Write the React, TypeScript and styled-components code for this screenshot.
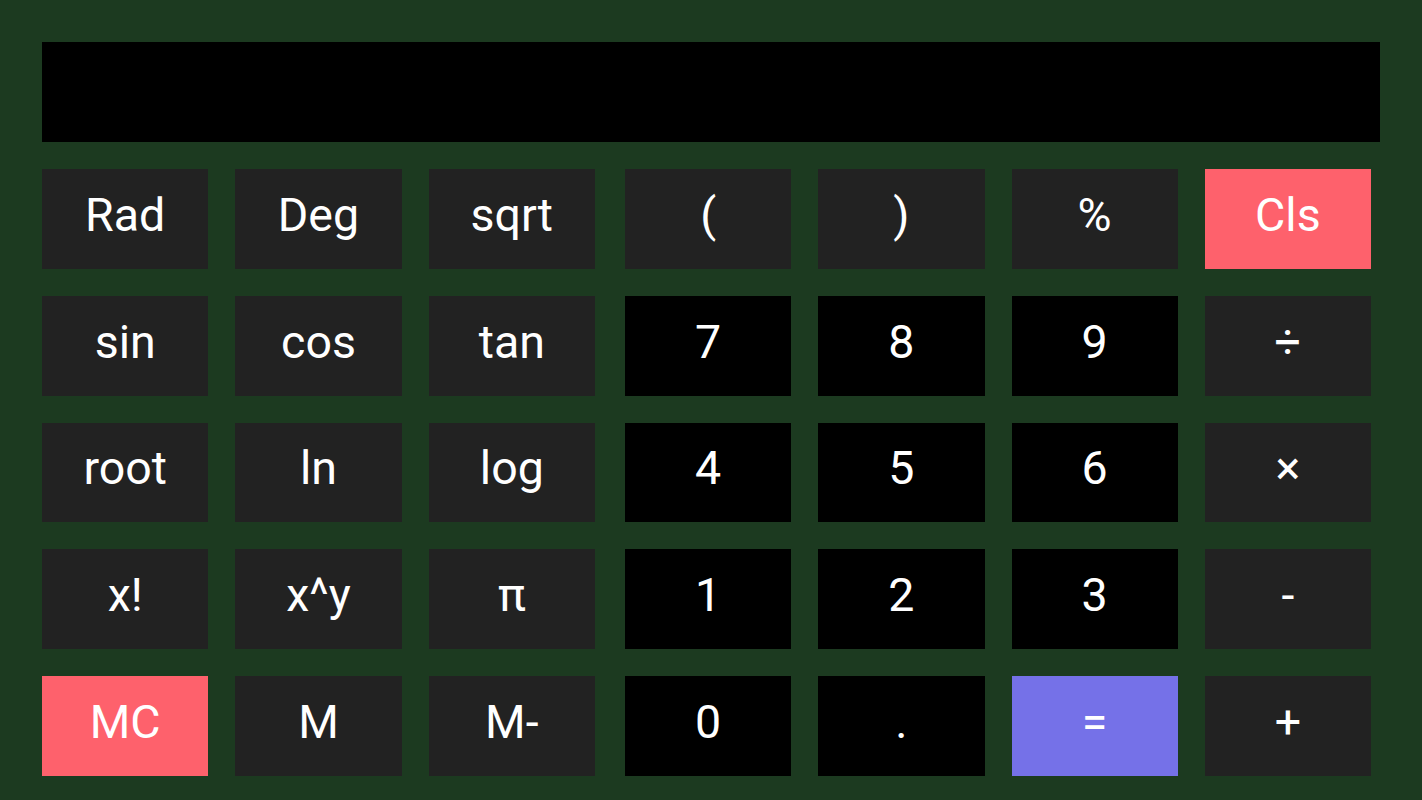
import React from "react";
import styled, { createGlobalStyle } from "styled-components";

const Global = createGlobalStyle`
  html, body { margin: 0; padding: 0; background: #1c3a20; }
  body { font-family: Roboto, "Noto Sans", sans-serif; }
`;

const Screen = styled.div`
  width: 1422px;
  height: 800px;
  box-sizing: border-box;
  padding: 42px 42px 0 42px;
  background: #1c3a20;
  display: flex;
  flex-direction: column;
  gap: 27px;
`;

const Display = styled.div`
  height: 100px;
  background: #000;
`;

const Keypad = styled.div`
  display: flex;
  gap: 30px;
  width: 1329px;
`;

const Group = styled.div<{ $cols: number; $width: number }>`
  width: ${(p) => p.$width}px;
  display: grid;
  grid-template-columns: repeat(${(p) => p.$cols}, 1fr);
  grid-auto-rows: 99.75px;
  column-gap: 27px;
  row-gap: 27px;
`;

type Variant = "fn" | "num" | "red" | "eq";

const bg: Record<Variant, string> = {
  fn: "#222222",
  num: "#000000",
  red: "#fe616c",
  eq: "#7571e8",
};

const Key = styled.button<{ $v: Variant }>`
  border: none;
  margin: 0;
  padding: 0 0 8px 0;
  background: ${(p) => bg[p.$v]};
  color: #ffffff;
  font-family: Roboto, "Noto Sans", sans-serif;
  font-size: 46.5px;
  font-weight: 400;
  display: flex;
  align-items: center;
  justify-content: center;
  cursor: pointer;
`;

const left: [string, Variant][][] = [
  [["Rad", "fn"], ["Deg", "fn"], ["sqrt", "fn"]],
  [["sin", "fn"], ["cos", "fn"], ["tan", "fn"]],
  [["root", "fn"], ["ln", "fn"], ["log", "fn"]],
  [["x!", "fn"], ["x^y", "fn"], ["π", "fn"]],
  [["MC", "red"], ["M", "fn"], ["M-", "fn"]],
];

const right: [string, Variant][][] = [
  [["(", "fn"], [")", "fn"], ["%", "fn"], ["Cls", "red"]],
  [["7", "num"], ["8", "num"], ["9", "num"], ["÷", "fn"]],
  [["4", "num"], ["5", "num"], ["6", "num"], ["×", "fn"]],
  [["1", "num"], ["2", "num"], ["3", "num"], ["-", "fn"]],
  [["0", "num"], [".", "num"], ["=", "eq"], ["+", "fn"]],
];

export default function App() {
  return (
    <>
      <Global />
      <Screen>
        <Display />
        <Keypad>
          <Group $cols={3} $width={553}>
            {left.flat().map(([t, v], i) => (
              <Key key={i} $v={v}>
                {t}
              </Key>
            ))}
          </Group>
          <Group $cols={4} $width={746}>
            {right.flat().map(([t, v], i) => (
              <Key key={i} $v={v}>
                {t}
              </Key>
            ))}
          </Group>
        </Keypad>
      </Screen>
    </>
  );
}
